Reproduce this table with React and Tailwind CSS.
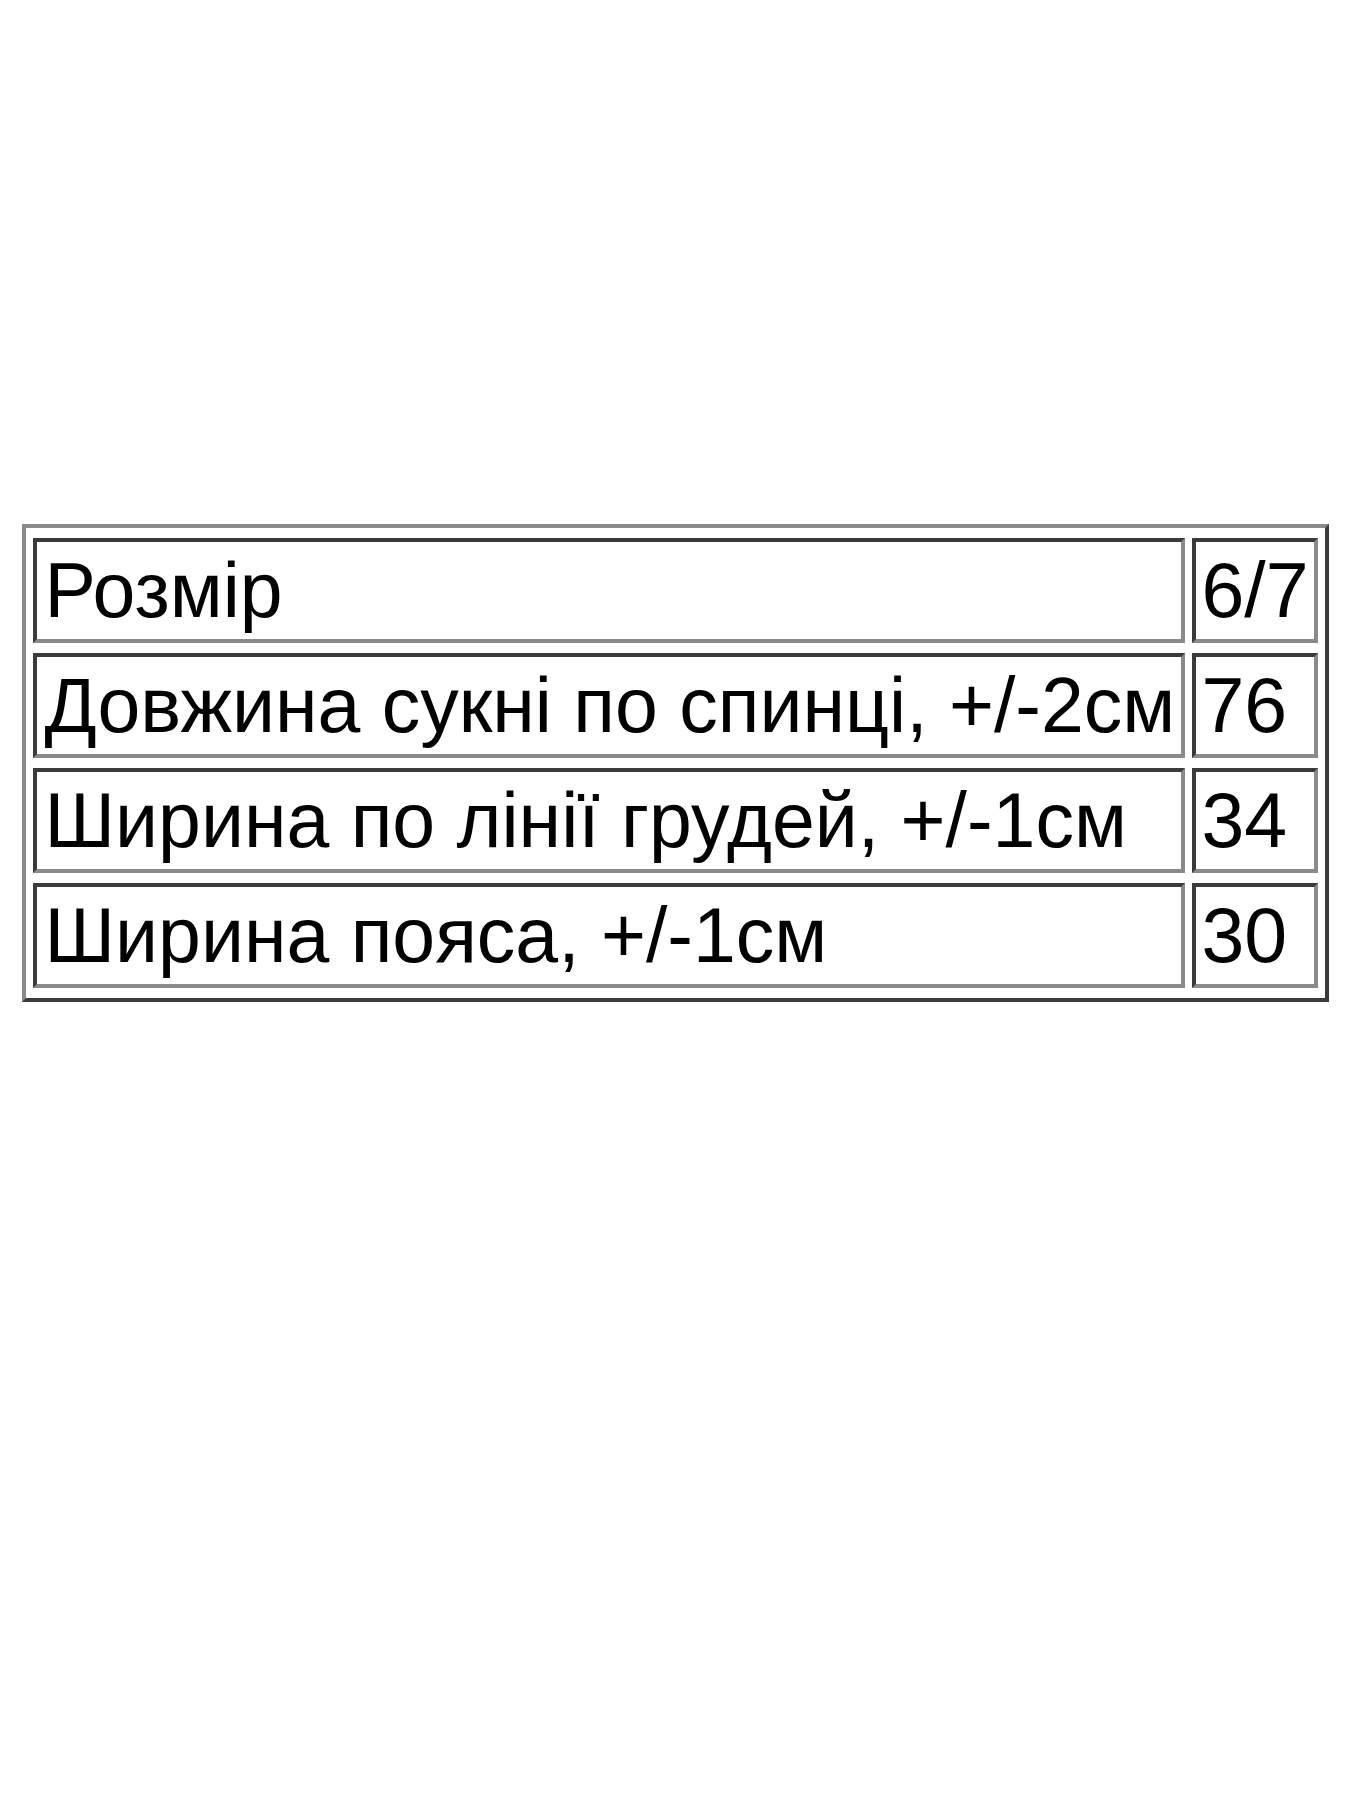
import React from "react";

const rows = [
  ["Розмір", "6/7"],
  ["Довжина сукні по спинці, +/-2см", "76"],
  ["Ширина по лінії грудей, +/-1см", "34"],
  ["Ширина пояса, +/-1см", "30"],
];

function Cell({ children, className = "" }) {
  return (
    <td
      className={
        "border-4 border-t-[#3a3a3a] border-l-[#3a3a3a] border-b-[#8a8a8a] border-r-[#8a8a8a] py-[5px] leading-[87px] align-middle whitespace-nowrap " +
        className
      }
    >
      {children}
    </td>
  );
}

export default function App() {
  return (
    <div className="min-h-[1800px] w-[1350px] bg-white pt-[524px] flex justify-center items-start">
      <table
        className="w-[1307px] border-separate border-spacing-x-[7px] border-spacing-y-[10px] border-4 border-t-[#8a8a8a] border-l-[#8a8a8a] border-b-[#3a3a3a] border-r-[#3a3a3a] text-[77px] text-black"
        style={{ fontFamily: '"Liberation Sans", Arial, sans-serif' }}
      >
        <tbody>
          {rows.map(([label, value]) => (
            <tr key={label}>
              <Cell className="pl-[8px] pr-[4px]">{label}</Cell>
              <Cell className="w-[125px] px-[5px]">{value}</Cell>
            </tr>
          ))}
        </tbody>
      </table>
    </div>
  );
}
